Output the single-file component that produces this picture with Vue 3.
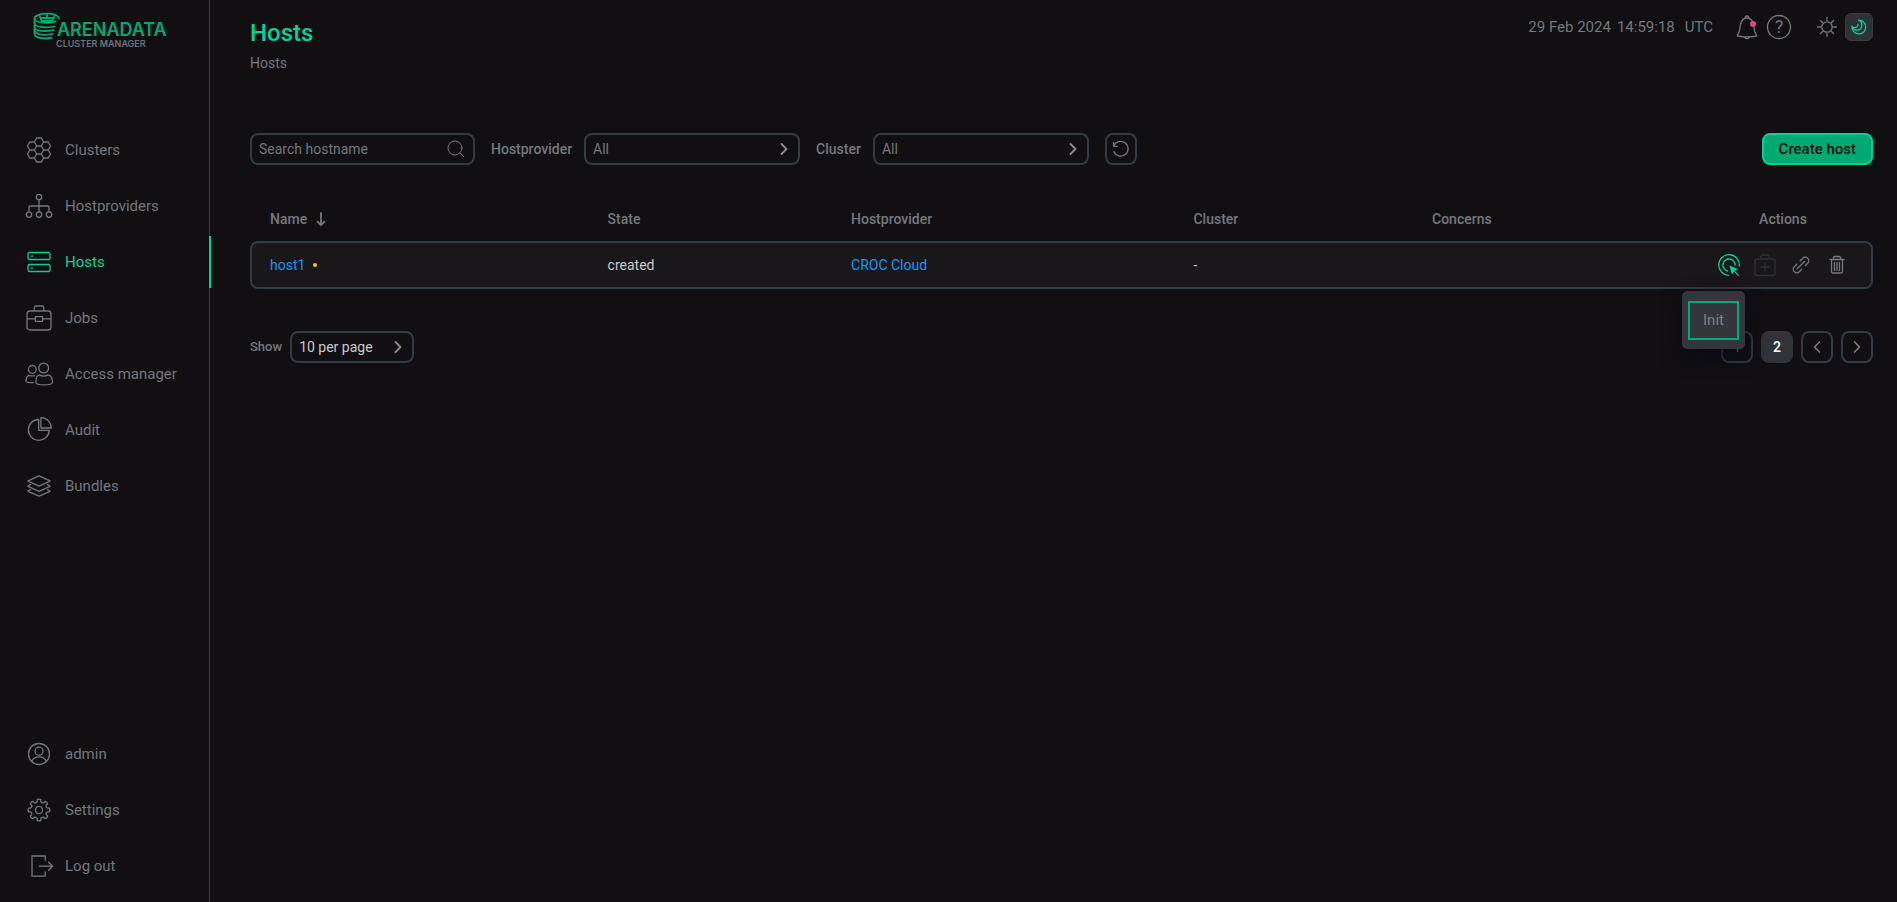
<script setup>
import { ref } from 'vue'

const mainNav = [
  { id: 'clusters', label: 'Clusters' },
  { id: 'hostproviders', label: 'Hostproviders' },
  { id: 'hosts', label: 'Hosts', active: true },
  { id: 'jobs', label: 'Jobs' },
  { id: 'access', label: 'Access manager' },
  { id: 'audit', label: 'Audit' },
  { id: 'bundles', label: 'Bundles' },
]
const userNav = [
  { id: 'admin', label: 'admin' },
  { id: 'settings', label: 'Settings' },
  { id: 'logout', label: 'Log out' },
]

const point = (r, deg) => {
  const a = (deg * Math.PI) / 180
  return `${(14 + r * Math.cos(a)).toFixed(2)} ${(14 + r * Math.sin(a)).toFixed(2)}`
}
const gear = () => {
  let d = `M${point(8.6, -12)}`
  for (let k = 0; k < 8; k++) {
    const c = k * 45
    d += `L${point(10.6, c - 10)}Q${point(11.4, c)} ${point(10.6, c + 10)}L${point(8.6, c + 12)}Q${point(7.2, c + 22.5)} ${point(8.6, c + 33)}`
  }
  return d + 'Z'
}
const hex = (x, y) => `M${x - 4.6} ${y}l2.3 -4h4.6l2.3 4l-2.3 4h-4.6z`

const icons = {
  clusters: [[14, 14], [14, 6], [14, 22], [7.1, 10], [7.1, 18], [20.9, 10], [20.9, 18]].map(([x, y]) => hex(x, y)).join(''),
  hostproviders: 'M16.7 5a2.7 2.7 0 1 1-5.4 0a2.7 2.7 0 1 1 5.4 0zM14 7.7V20M4 20V15.3Q4 14 5.3 14H22.7Q24 14 24 15.3V20M6.7 22.6a2.7 2.7 0 1 1-5.4 0a2.7 2.7 0 1 1 5.4 0zM16.7 22.6a2.7 2.7 0 1 1-5.4 0a2.7 2.7 0 1 1 5.4 0zM26.7 22.6a2.7 2.7 0 1 1-5.4 0a2.7 2.7 0 1 1 5.4 0z',
  hosts: 'M4.5 4.5h19a1.5 1.5 0 0 1 1.5 1.5v4a1.5 1.5 0 0 1-1.5 1.5h-19a1.5 1.5 0 0 1-1.5-1.5v-4a1.5 1.5 0 0 1 1.5-1.5zM4.5 16.5h19a1.5 1.5 0 0 1 1.5 1.5v4a1.5 1.5 0 0 1-1.5 1.5h-19a1.5 1.5 0 0 1-1.5-1.5v-4a1.5 1.5 0 0 1 1.5-1.5zM6.3 8.2h1.4M6.3 20.2h1.4',
  jobs: 'M5 7h18a3 3 0 0 1 3 3v13a3 3 0 0 1-3 3h-18a3 3 0 0 1-3-3v-13a3 3 0 0 1 3-3zM9.3 7V3.5Q9.3 2 10.8 2H17.2Q18.7 2 18.7 3.5V7M2 14Q2.4 14.9 4 14.9H10.4M17.6 14.9H24Q25.6 14.9 26 14M10.4 12.6H17.6V17.4H10.4Z',
  access: 'M23.6 8a4.9 4.9 0 1 1-9.8 0a4.9 4.9 0 1 1 9.8 0zM14.2 14.9C11.8 15.6 10.9 18.3 10.9 22.5C10.9 24.2 15 24.9 19 24.9S27.4 24.2 27.4 22.5C27.4 18.3 26.4 15.6 23.4 14.9Q18.8 17.2 14.2 14.9ZM11.2 9.4a3.9 3.9 0 1 1-7.8 0a3.9 3.9 0 1 1 7.8 0zM9.4 15.7Q6.8 16.3 4 15.3C1.7 16 1 18.4 1 21.5Q1 22.6 8.4 22.7',
  audit: 'M13.7 3.5A10.4 10.4 0 1 0 24.2 14.4H13.7ZM15.9 1.6A10.2 10.2 0 0 1 26.2 12H15.9Z',
  bundles: 'M14 3.9L25 8.8V9.2L14 14.1L3 9.2V8.8ZM5.6 12.5L3 14V14.4L14 19.3L25 14.4V14L22.4 12.5M5.6 17.7L3 19V19.4L14 24.2L25 19.4V19L22.4 17.7',
  admin: 'M24.5 14a10.5 10.5 0 1 1-21 0a10.5 10.5 0 1 1 21 0zM18 11.2a4 4 0 1 1-8 0a4 4 0 1 1 8 0zM6.8 21.4Q8.6 16.8 14 16.8T21.2 21.4',
  settings: gear() + 'M17.6 14a3.6 3.6 0 1 1-7.2 0a3.6 3.6 0 1 1 7.2 0z',
  logout: 'M20.2 8.2V4H7V24.2H20.2V20M14.4 14.2H27.4M23.6 10.2L27.6 14.2L23.6 18.2',
}

const search = ref('')
const provider = ref('All')
const cluster = ref('All')
const perPage = ref('10 per page')
</script>

<template>
  <div class="app">
    <aside class="sidebar">
      <a class="logo" href="#" aria-label="Arenadata Cluster Manager">
        <svg width="134" height="32" viewBox="0 0 134 32">
          <g class="barrel">
            <path d="M26 6.5C25 3.5 20 1.7 14 1.7C7 1.700 1.500 3.800 1.500 6.300V22C1.500 25 7 26.500 13 26.500Q16 26.500 18.500 25.700" />
            <path d="M1.500 7C2.500 9.800 7.500 10.800 13 10.800Q19 10.800 22.500 9.500" />
            <path d="M1.500 11.500C2.500 14.500 7.500 15.300 13 15.300Q18.500 15.300 21.500 14.500M1.500 15.800C2.500 18.300 7.500 19 12.500 19Q17 19 20.500 18.200M1.500 19.500C3.500 22 7.500 22.800 12.500 22.800Q16.500 22.800 19.500 22" />
            <path d="M6.500 3.500L8.500 9H19.500L21.500 3.500M14 2V6M8.500 6H19.500" />
          </g>
          <text class="brand" x="24" y="24">ARENADATA</text>
          <text class="product" x="23" y="35">CLUSTER MANAGER</text>
        </svg>
      </a>
      <nav class="nav" aria-label="Main">
        <a v-for="item in mainNav" :key="item.id" href="#" class="nav-link" :class="{ active: item.active }">
          <svg class="icon" width="28" height="28" viewBox="0 0 28 28"><path :d="icons[item.id]" /></svg>
          <span>{{ item.label }}</span>
        </a>
      </nav>
      <nav class="nav nav-user" aria-label="User">
        <a v-for="item in userNav" :key="item.id" href="#" class="nav-link">
          <svg class="icon" width="28" height="28" viewBox="0 0 28 28"><path :d="icons[item.id]" /></svg>
          <span>{{ item.label }}</span>
        </a>
      </nav>
    </aside>

    <main class="main">
      <header class="top">
        <div>
          <h1>Hosts</h1>
          <a class="crumb" href="#">Hosts</a>
        </div>
        <div class="tools">
          <time class="clock"><span>29 Feb 2024</span><span>14:59:18</span><span class="zone">UTC</span></time>
          <button class="tool" aria-label="Notifications">
            <svg class="icon" width="24" height="24" viewBox="0 0 24 24">
              <path d="M2.500 20C5 17 4.800 13 5.600 9.200C6.500 5 9 3 12 3S17.500 5 18.400 9.200C19.200 13 19 17 21.500 20V21Q12 22.800 2.500 21ZM10 2.800Q10.300 1 12 1T14 2.800M9.500 22.200Q12 25 14.500 22.200" />
              <circle class="alert" cx="18" cy="9" r="3" />
            </svg>
          </button>
          <button class="tool help" aria-label="Help">
            <svg class="icon" width="26" height="26" viewBox="0 0 26 26">
              <circle cx="13" cy="13" r="11.500" />
              <text x="13" y="19" text-anchor="middle">?</text>
            </svg>
          </button>
          <button class="tool sun" aria-label="Light theme">
            <svg class="icon" width="20" height="20" viewBox="0 0 20 20">
              <circle cx="10" cy="10" r="5.200" />
              <path d="M10 .5V3.500M10 16.500V19.500M.5 10H3.500M16.500 10H19.500M3.500 3.500L5.500 5.500M14.500 14.500L16.500 16.500M3.500 16.500L5.500 14.500M14.500 5.500L16.500 3.500" />
            </svg>
          </button>
          <button class="tool moon" aria-label="Dark theme">
            <svg class="icon" width="16" height="16" viewBox="0 0 16 16">
              <path d="M7.600 1.200A6.900 6.900 0 1 1 1 7.200Q2 11.200 6 11.200A5.200 5.200 0 0 0 7.600 1.200M1 7.200Q1.800 8.600 3.500 8.600Q6.600 8.600 7 5.500" />
            </svg>
          </button>
        </div>
      </header>

      <form class="filters" @submit.prevent>
        <div class="field search">
          <input v-model="search" type="text" placeholder="Search hostname" aria-label="Search hostname" />
          <svg class="icon" width="18" height="18" viewBox="0 0 18 18"><circle cx="8" cy="8" r="7" /><path d="M13 13L16.700 16.700" /></svg>
        </div>
        <label for="provider">Hostprovider</label>
        <div class="field filter">
          <select id="provider" v-model="provider"><option>All</option></select>
          <svg class="chevron" width="8" height="12" viewBox="0 0 8 12"><path d="M1.500 1L6.500 6L1.500 11" /></svg>
        </div>
        <label for="cluster">Cluster</label>
        <div class="field filter">
          <select id="cluster" v-model="cluster"><option>All</option></select>
          <svg class="chevron" width="8" height="12" viewBox="0 0 8 12"><path d="M1.500 1L6.500 6L1.500 11" /></svg>
        </div>
        <button class="square reset" type="button" aria-label="Reset filters">
          <svg class="icon" width="18" height="18" viewBox="0 0 18 18"><path d="M1.500 2.500V6.300H5.300M1.700 6.300A7.400 7.400 0 1 1 1.800 11.500" /></svg>
        </button>
        <button class="create" type="button">Create host</button>
      </form>

      <table>
        <colgroup>
          <col class="c-name" /><col class="c-state" /><col class="c-provider" /><col class="c-cluster" /><col /><col class="c-actions" />
        </colgroup>
        <thead>
          <tr>
            <th>
              <span class="sort">Name
                <svg width="10" height="14" viewBox="0 0 10 14"><path d="M5 1V13M1.500 9.700L5 13.200L8.500 9.700" /></svg>
              </span>
            </th>
            <th>State</th>
            <th>Hostprovider</th>
            <th>Cluster</th>
            <th>Concerns</th>
            <th class="center">Actions</th>
          </tr>
        </thead>
        <tbody>
          <tr>
            <td><span class="host"><a href="#">host1</a><i class="dot"></i></span></td>
            <td>created</td>
            <td><a href="#">CROC Cloud</a></td>
            <td>-</td>
            <td></td>
            <td>
              <div class="actions">
                <div class="action-menu">
                  <button class="act green" aria-label="Actions">
                    <svg class="icon" width="28" height="28" viewBox="0 0 28 28">
                      <path d="M24.300 15A10.300 10.300 0 1 0 13.500 24.300M20.100 14A6.100 6.100 0 1 0 12.500 20" />
                      <path class="solid" d="M14.300 14.500L23 18L19.700 19.700L24.200 24.200L23.400 25L18.800 20.500L17 23.700Z" />
                    </svg>
                  </button>
                  <div class="popover"><button class="popover-item">Init</button></div>
                </div>
                <button class="act dim" aria-label="Maintenance mode" disabled>
                  <svg class="icon" width="28" height="28" viewBox="0 0 28 28"><path d="M6.500 8h15a2.500 2.500 0 0 1 2.500 2.500v11.500a2.500 2.500 0 0 1-2.500 2.500h-15a2.500 2.500 0 0 1-2.500-2.500v-11.500a2.500 2.500 0 0 1 2.500-2.500zM10 8V5.500Q10 4 11.500 4H16.500Q18 4 18 5.500V8M14 12V20M10 16H18" /></svg>
                </button>
                <button class="act" aria-label="Link">
                  <svg class="icon" width="28" height="28" viewBox="0 0 28 28"><path transform="translate(14 14) rotate(-45)" d="M-2.500-3.500H-6a3.500 3.500 0 0 0 0 7H-2.500M2.500-3.500H6a3.500 3.500 0 0 1 0 7H2.500M-5 0H5" /></svg>
                </button>
                <button class="act" aria-label="Delete">
                  <svg class="icon" width="28" height="28" viewBox="0 0 28 28"><path d="M7 8.500H21M10.500 8.500V6.500Q10.500 5.500 11.500 5.500H16.500Q17.500 5.500 17.500 6.500V8.500M8.500 8.500V20.500Q8.500 22 10 22H18Q19.500 22 19.500 20.500V8.500M11.500 11.500V19.500M14 11.500V19.500M16.500 11.500V19.500" /></svg>
                </button>
              </div>
            </td>
          </tr>
        </tbody>
      </table>

      <footer class="pager">
        <label for="per-page">Show</label>
        <div class="field per-page">
          <select id="per-page" v-model="perPage"><option>10 per page</option></select>
          <svg class="chevron" width="8" height="12" viewBox="0 0 8 12"><path d="M1.500 1L6.500 6L1.500 11" /></svg>
        </div>
        <div class="pages">
          <button class="square">1</button>
          <button class="square current">2</button>
          <button class="square" aria-label="Previous page"><svg class="chevron-icon" width="8" height="12" viewBox="0 0 8 12"><path d="M6.500 1L1.500 6L6.500 11" /></svg></button>
          <button class="square" aria-label="Next page"><svg class="chevron-icon" width="8" height="12" viewBox="0 0 8 12"><path d="M1.500 1L6.500 6L1.500 11" /></svg></button>
        </div>
      </footer>
    </main>
  </div>
</template>

<style>
body {
  background: #110f12;
}
</style>

<style scoped>
.app {
  display: flex;
  min-height: 100vh;
  background: #110f12;
  color: #74787d;
  font-family: Roboto, "Liberation Sans", sans-serif;
  font-size: 14px;
  line-height: 20px;
}
.app *,
.app {
  box-sizing: border-box;
}
a {
  color: #1a95f0;
  text-decoration: none;
}
button,
input,
select {
  margin: 0;
  padding: 0;
  border: 0;
  background: none;
  color: inherit;
  font: inherit;
  outline: none;
}
svg {
  display: block;
  flex: none;
  overflow: visible;
}
svg path,
svg circle {
  fill: none;
  stroke: currentColor;
  stroke-width: 1.3;
  stroke-linecap: round;
  stroke-linejoin: round;
}

.sidebar {
  display: flex;
  flex: none;
  flex-direction: column;
  width: 210px;
  padding: 12px 0 10px;
  border-right: 1px solid #3a3d42;
}
.logo {
  margin: 0 0 80px 33px;
  color: #00a971;
}
.logo .barrel path {
  stroke-width: 1.8;
}
.brand {
  fill: #00a971;
  font-family: Inter, sans-serif;
  font-size: 18px;
  font-weight: 600;
}
.product {
  fill: #68747f;
  font-family: Inter, sans-serif;
  font-size: 9px;
  font-weight: 600;
}
.nav {
  display: flex;
  flex-direction: column;
  gap: 4px;
}
.nav-user {
  margin-top: auto;
}
.nav-link {
  display: flex;
  align-items: center;
  gap: 12px;
  height: 52px;
  margin-right: -2px;
  padding-left: 25px;
  border-right: 2px solid transparent;
  color: #74787d;
  font-size: 15px;
}
.nav-link.active {
  border-right-color: #00d39b;
  color: #00d39b;
}

.main {
  flex: 1;
  min-width: 0;
  padding: 13px 24px 24px 40px;
}
.top {
  display: flex;
  align-items: flex-start;
  justify-content: space-between;
  min-height: 120px;
}
h1 {
  margin: 4px 0;
  color: #00d39b;
  font-size: 24px;
  font-weight: 500;
  line-height: 32px;
}
.crumb {
  display: block;
  color: #74787d;
}
.tools {
  display: flex;
  align-items: center;
  height: 28px;
}
.clock {
  display: flex;
  gap: 6px;
  margin-right: 22px;
  font-size: 15px;
}
.clock .zone {
  margin-left: 4px;
}
.tool {
  display: flex;
  align-items: center;
  justify-content: center;
}
.alert {
  fill: #d94c78;
  stroke: none;
}
.help {
  margin: 0 25px 0 7px;
}
.help text {
  fill: currentColor;
  font-size: 18px;
}
.sun {
  margin-right: 8px;
}
.moon {
  width: 28px;
  height: 28px;
  border: 1px solid #363c42;
  border-radius: 6px;
  background: #303136;
  color: #00d39b;
}

.filters {
  display: flex;
  align-items: center;
}
.field {
  position: relative;
  height: 32px;
  color: #74787d;
}
.field input,
.field select {
  appearance: none;
  width: 100%;
  height: 32px;
  padding: 0 32px 0 7px;
  border: 2px solid #323c44;
  border-radius: 8px;
}
.field option {
  background: #19171a;
}
.field input::placeholder {
  color: #74787d;
  opacity: 1;
}
.search {
  width: 225px;
}
.search .icon {
  position: absolute;
  top: 7px;
  right: 10px;
  pointer-events: none;
}
.search .icon path,
.search .icon circle {
  stroke-width: 1;
}
.filter {
  width: 216px;
}
.filters label {
  margin: 0 12px 0 16px;
  font-weight: 500;
}
.chevron {
  position: absolute;
  top: 10px;
  right: 12px;
  pointer-events: none;
}
.chevron path,
.chevron-icon path {
  stroke: #8a8d92;
  stroke-width: 1.8;
}
.chevron-icon path {
  stroke: #7e8287;
  stroke-width: 1.5;
}
.square {
  display: flex;
  align-items: center;
  justify-content: center;
  width: 32px;
  height: 32px;
  border: 2px solid #323c44;
  border-radius: 8px;
}
.reset {
  margin-left: 16px;
}
.create {
  height: 32px;
  margin-left: auto;
  padding: 0 15px;
  border: 2px solid #00d39b;
  border-radius: 8px;
  background: #00a971;
  color: #110f12;
  font-size: 15px;
  font-weight: 500;
}

table {
  width: 100%;
  margin-top: 32px;
  border-collapse: separate;
  border-spacing: 0;
  table-layout: fixed;
}
.c-name {
  width: 20.8%;
}
.c-state {
  width: 15%;
}
.c-provider {
  width: 21.1%;
}
.c-cluster {
  width: 14.7%;
}
.c-actions {
  width: 180px;
}
th,
td {
  padding: 0 20px;
  text-align: left;
}
th {
  height: 44px;
  font-weight: 500;
}
th.center {
  text-align: center;
}
.sort {
  display: flex;
  align-items: center;
  gap: 9px;
}
.sort path {
  stroke-width: 1.8;
}
td {
  height: 48px;
  border: solid #323c44;
  border-width: 2px 0;
  background: #19171a;
  color: #c9cacc;
}
td:first-child {
  padding-left: 18px;
  border-left-width: 2px;
  border-radius: 8px 0 0 8px;
}
td:last-child {
  padding-right: 18px;
  border-right-width: 2px;
  border-radius: 0 8px 8px 0;
}
.host {
  display: flex;
  align-items: center;
  gap: 8px;
}
.dot {
  width: 4px;
  height: 4px;
  border-radius: 2px;
  background: #f5c931;
}
.actions {
  display: flex;
  justify-content: center;
  gap: 8px;
  color: #74787d;
}
.action-menu {
  position: relative;
}
.act {
  display: block;
}
.act.green {
  color: #00d39b;
}
.act.green .solid {
  fill: currentColor;
  stroke: none;
}
.act.dim {
  color: #2c3137;
}
.popover {
  position: absolute;
  z-index: 1;
  top: 40px;
  right: -2px;
  padding: 10px 6px 9px;
  border-radius: 5px;
  background: #35363b;
  box-shadow: 0 8px 20px rgba(8, 8, 22, 0.7);
}
.popover-item {
  display: block;
  width: 51px;
  height: 39px;
  padding-bottom: 2px;
  border: 2px solid #00a97e;
  color: #7b7f85;
  font-size: 15px;
}

.pager {
  display: flex;
  align-items: center;
  margin-top: 42px;
}
.pager label {
  margin-right: 8px;
  font-size: 13px;
  font-weight: 500;
}
.per-page {
  width: 124px;
  color: #c9cacc;
}
.pages {
  display: flex;
  gap: 8px;
  margin-left: auto;
}
.square.current {
  border-color: #323338;
  background: #323338;
  color: #fff;
  font-weight: 500;
}
</style>
